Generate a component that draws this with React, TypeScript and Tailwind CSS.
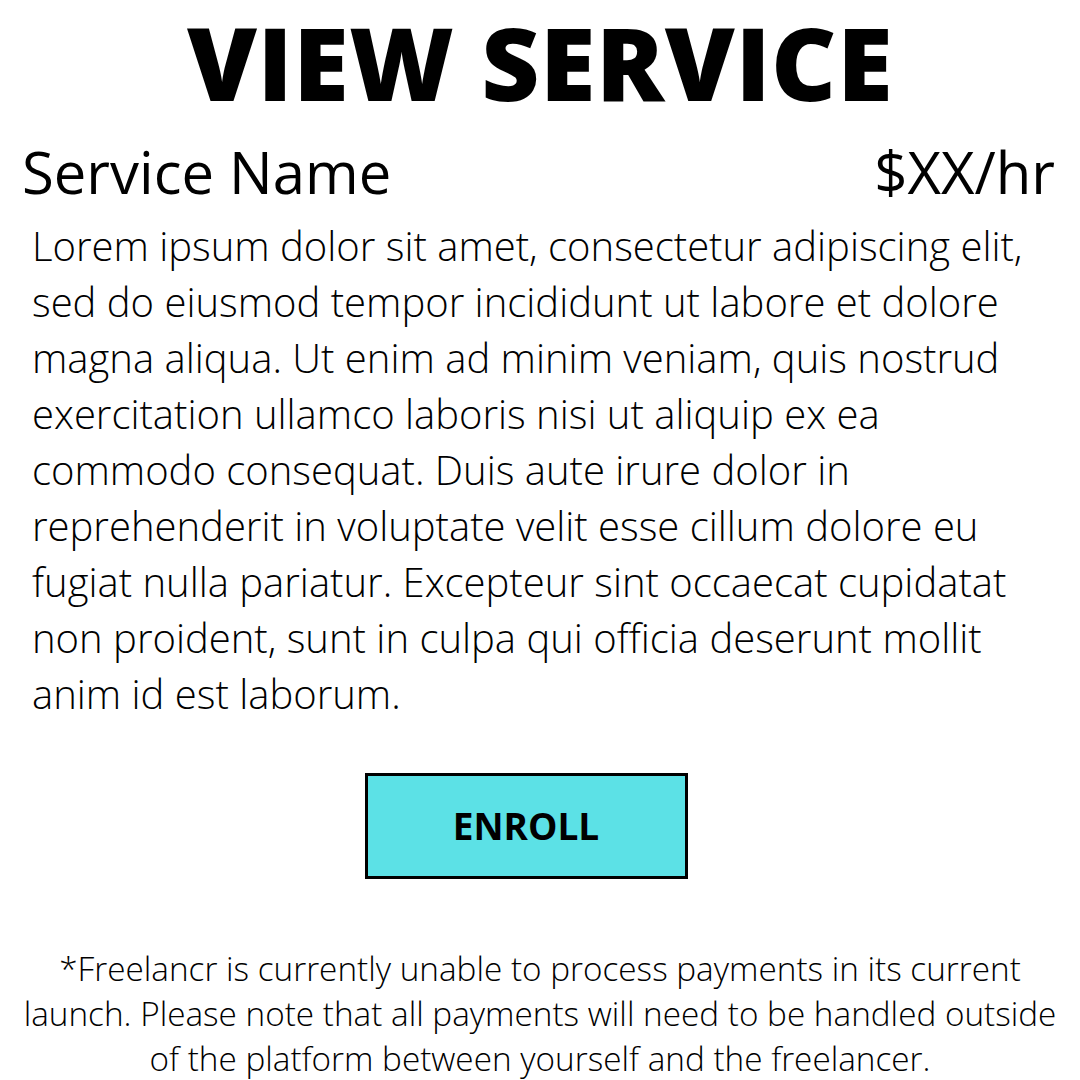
export default function App() {
  return (
    <div
      className="w-[1080px] h-[1080px] bg-white text-black overflow-hidden flex flex-col"
      style={{ fontFamily: '"Open Sans", sans-serif' }}
    >
      {/* Title */}
      <h1 className="text-center font-extrabold text-[101px] leading-[124px] tracking-[0.5px]">
        VIEW SERVICE
      </h1>

      {/* Name + rate */}
      <div className="flex justify-between items-baseline pl-[22px] pr-[25px] mt-[8px]">
        <span className="text-[58px] leading-[80px]">Service Name</span>
        <span className="text-[58px] leading-[80px]">$XX/hr</span>
      </div>

      {/* Description */}
      <p className="mt-[6px] pl-[32px] pr-[40px] text-[40px] leading-[56px] font-light">
        Lorem ipsum dolor sit amet, consectetur adipiscing elit, sed do eiusmod tempor incididunt ut labore et dolore magna aliqua. Ut enim ad minim veniam, quis nostrud exercitation ullamco laboris nisi ut aliquip ex ea commodo consequat. Duis aute irure dolor in reprehenderit in voluptate velit esse cillum dolore eu fugiat nulla pariatur. Excepteur sint occaecat cupidatat non proident, sunt in culpa qui officia deserunt mollit anim id est laborum.
      </p>

      {/* Enroll */}
      <div className="flex justify-center mt-[51px]">
        <button className="w-[323px] h-[106px] ml-[-28px] border-[3px] border-black bg-[#5ce1e6] text-[37px] font-bold">
          ENROLL
        </button>
      </div>

      {/* Payment note */}
      <p className="mt-[67px] px-[10px] text-center text-[33.3px] leading-[45px] font-light">
        *Freelancr is currently unable to process payments in its current launch. Please note that all payments will need to be handled outside of the platform between yourself and the freelancer.
      </p>
    </div>
  );
}
